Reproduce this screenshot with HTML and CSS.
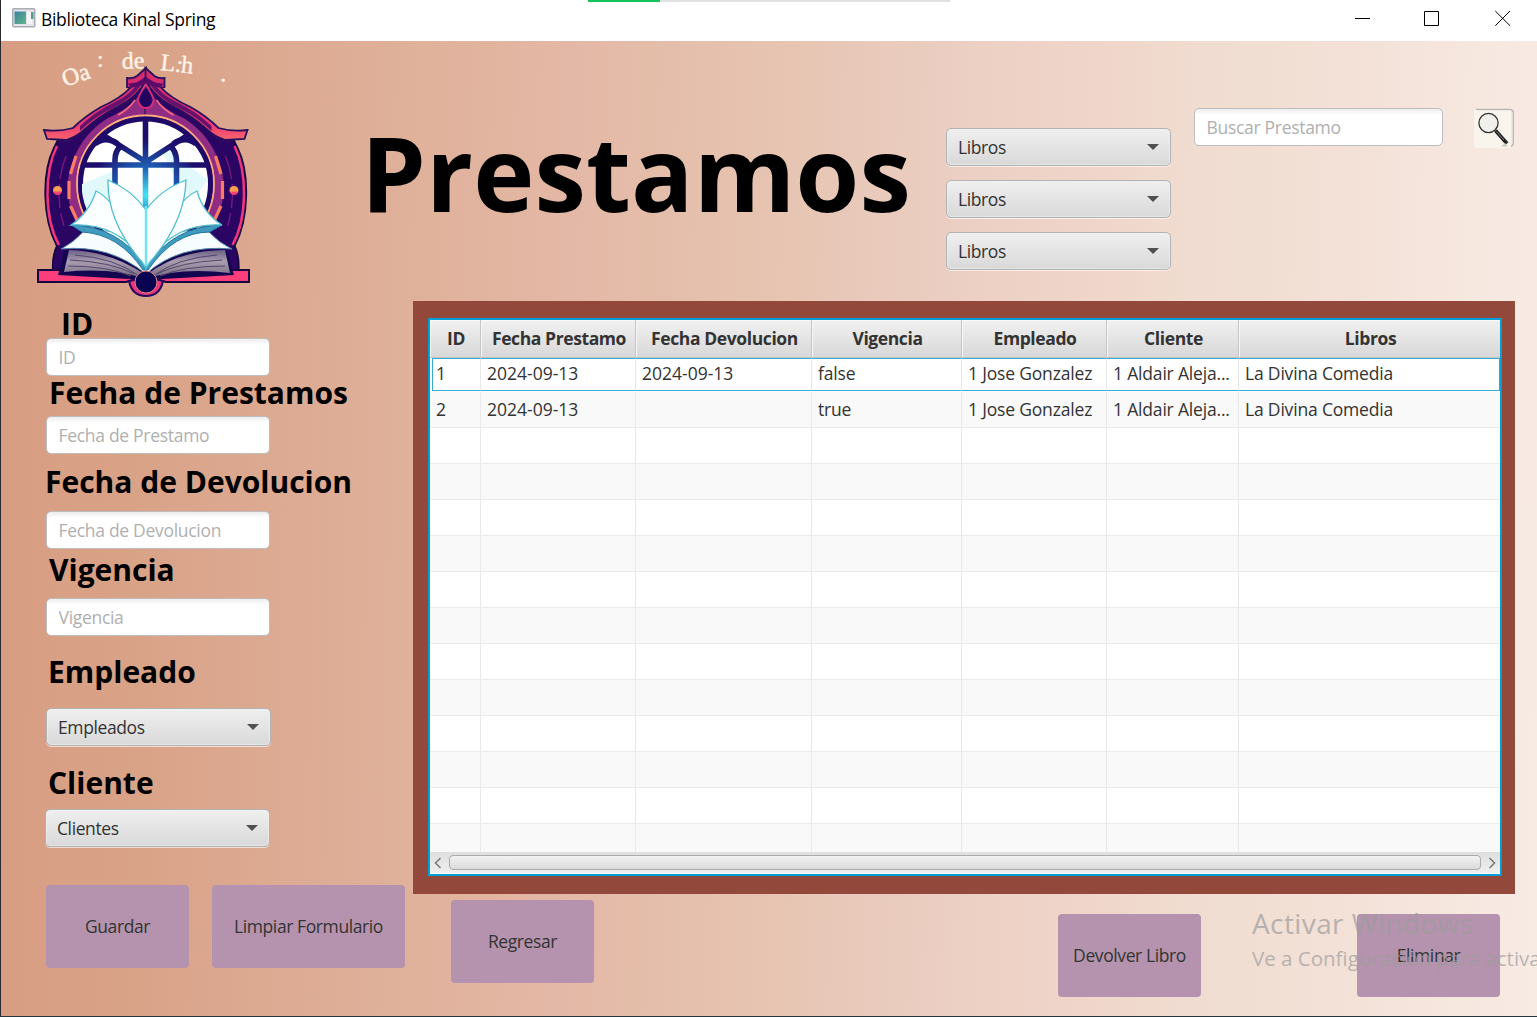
FILE: index.html
```html
<!DOCTYPE html>
<html lang="es">
<head>
<meta charset="utf-8">
<title>Biblioteca Kinal Spring</title>
<link rel="stylesheet" href="styles.css">
</head>
<body>
<div class="window">
  <header class="titlebar">
    <svg class="app-icon" width="24" height="20" viewBox="0 0 24 20">
      <rect x=".75" y=".75" width="22" height="18" rx="1" fill="#e4e5ea" stroke="#a9acb2" stroke-width="1.5"/>
      <rect x="2.500" y="3.500" width="11.500" height="12.500" fill="url(#app)"/>
      <rect x="15" y="4" width="5" height="12" fill="#f6f6f6"/>
      <rect x="19" y="4" width="2.500" height="7" fill="#4d9a90"/>
      <defs><linearGradient id="app" x1="0" y1="0" x2="1" y2="1"><stop offset="0" stop-color="#3c80a0"/><stop offset="1" stop-color="#60b888"/></linearGradient></defs>
    </svg>
    <span class="app-title">Biblioteca Kinal Spring</span>
    <div class="controls">
      <svg width="16" height="16" viewBox="0 0 16 16"><path d="M0 8.500H15"/></svg>
      <svg width="16" height="16" viewBox="0 0 16 16"><path d="M-.5 1.500H13.500V15.500H-.5Z"/></svg>
      <svg width="16" height="16" viewBox="0 0 16 16"><path d="M.3 1L15 15.700M15 1L.3 15.700"/></svg>
    </div>
    <div class="progress"><i></i></div>
  </header>

  <main class="scene">
    <section class="top">
      <svg class="logo" width="230" height="260" viewBox="30 43 230 260">
        <defs>
          <linearGradient id="roof" gradientUnits="userSpaceOnUse" x1="0" y1="80" x2="0" y2="142"><stop offset="0" stop-color="#d52c6f"/><stop offset=".7" stop-color="#ec3775"/><stop offset="1" stop-color="#fb6a6c"/></linearGradient>
          <radialGradient id="bars" gradientUnits="userSpaceOnUse" cx="146" cy="195" r="66"><stop offset="0" stop-color="#47e3f5"/><stop offset=".42" stop-color="#1e5fb4"/><stop offset=".85" stop-color="#1c0d6c"/></radialGradient>
          <linearGradient id="dot" x1="0" y1="0" x2="0" y2="1"><stop offset=".5" stop-color="#fba04f"/><stop offset=".75" stop-color="#f63d78"/></linearGradient>
          <linearGradient id="pages" x1="0" y1="0" x2="0" y2="1"><stop offset="0" stop-color="#6d6186"/><stop offset=".4" stop-color="#a99caf"/><stop offset="1" stop-color="#75677f"/></linearGradient>
          <clipPath id="glass"><circle cx="145.500" cy="184" r="64"/></clipPath>
          <g id="half">
            <path d="M146 88L60 136 54 148C42 172 42 218 57 246Q52 256 53 272H146Z" fill="#2b0563" stroke="#180640" stroke-width="2"/>
            <path d="M57 146C44 172 44 218 59 245" fill="none" stroke="#ee357e" stroke-width="2.500"/>
            <path d="M66 156C57 178 57 204 64 226" fill="none" stroke="#7b1a7e" stroke-width="1.300" stroke-dasharray="24 5"/>
            <path d="M146 84Q136 106 108 118Q84 133 74 158C62 185 68 215 86 236H146Z" fill="#912c85"/>
            <path d="M135 100Q129 109 118 115" fill="none" stroke="#f46c7c" stroke-width="1.500"/>
            <path d="M146 80Q140 97 122 106C104 114 90 122 78 136Q70 142 60 143L68 137Q90 114 118 102Z" fill="#3a0866"/>
            <path d="M146 68L137 76Q133 79 127 78V87L130 88Q121 98 101 107Q85 116 73 128Q59 132 44 130L47 139 66 140Q77 137 85 129Q98 117 117 107Q138 97 146 80Z" fill="url(#roof)" stroke="#29105b" stroke-width="1.800"/>
            <path d="M80 131Q94 117 113 108Q133 98 141 85L137 84Q130 95 115 102Q96 111 80 126Z" fill="#66126c"/>
            <path d="M128 83.500Q138 84 146 76V84L131 88Z" fill="#5a0b69"/>
            <path d="M76 156L70.500 174M69 181V199M70.500 206L77 220" fill="none" stroke="#fa7c62" stroke-width="3.200"/>
            <circle cx="57.500" cy="190.500" r="4.500" fill="url(#dot)"/>
          </g>
        </defs>
        <g class="arc-text">
          <text transform="translate(65 87) rotate(-19)">Oa</text>
          <text transform="translate(97 67)">:</text>
          <text transform="translate(122 69) rotate(-2)">de</text>
          <text transform="translate(160 70) rotate(6)">L.h</text>
          <text transform="translate(220 80) rotate(25)">.</text>
          <text transform="translate(177 64)">.</text>
        </g>
        <use href="#half"/>
        <use href="#half" transform="translate(291.500 0) scale(-1 1)"/>
        <path d="M146 85Q137 97 138 101Q140 108 146 108T153.500 101Q154 97 146 85Z" fill="#230361" stroke="#d72c7b" stroke-width="2"/>
        <circle cx="145.500" cy="184" r="68.500" fill="none" stroke="#ffb07a" stroke-width="1.800"/>
        <circle cx="145.500" cy="184" r="65" fill="#fff" stroke="#200a68" stroke-width="5"/>
        <g clip-path="url(#glass)">
          <path d="M82 184L118 169 108 210H82ZM160 145L171 171 192 200 208 180Z" fill="#e2f9fb"/>
          <path d="M145.500 118V210M82 165H209M146 162L103 135M146 162L188 135M115 190V160Q115 151 121 146M176.500 190V160Q176 151 170 146M95 144Q105 135 118 144M196 144Q186 135 173 144" fill="none" stroke="url(#bars)" stroke-width="5.600"/>
        </g>
        <path d="M38 270H249V282H166L156 279H136L126 282H38Z" fill="#fa3d7b" stroke="#180640" stroke-width="2"/>
        <path d="M65 250L58 275 129 279H162L234 275 227 250Z" fill="#13054f"/>
        <path d="M69 250Q110 251 146 275Q179 250 225 250L230 273Q179 267 146 279Q112 267 64 272Z" fill="url(#pages)"/>
        <path d="M75 255Q115 258 139 276M70 260Q112 262 134 274M68 266Q107 266 131 276M217 255Q177 258 153 276M222 260Q180 262 157 274M225 266Q184 266 160 276" fill="none" stroke="#51476b" stroke-width="1"/>
        <path d="M84 231Q73 243 61 249Q109 244 146 274Q179 244 232 249Q219 243 208 231Z" fill="#f7fdff" stroke="#5085a2" stroke-width="1"/>
        <path d="M71 225Q119 226 146 267Q173 226 222 225L210 232Q174 232 148 270H143Q119 234 82 232Z" fill="#409bbf" stroke="#2375a0" stroke-width="1"/>
        <path d="M71 225Q89 213 96 191Q118 201 145 263Q119 222 71 225ZM222 225Q203 213 197 191Q174 201 147 263Q174 222 222 225Z" fill="#fcffff" stroke="#52c2d1" stroke-width="1.300"/>
        <path d="M108 180Q107 222 142 262L146 268V210Q132 190 108 180ZM186 180Q185 222 150 262L146 268V210Q160 190 186 180Z" fill="#fbffff" stroke="#4ebfd0" stroke-width="1.300"/>
        <path d="M146 206V266" stroke="#71e5ed" stroke-width="2.500"/>
        <path d="M129 281Q132 296 146 296T163 281L155 279 139 279Z" fill="#e83679" stroke="#25085f" stroke-width="2"/>
        <circle cx="146" cy="282" r="11" fill="#080451" stroke="#e58383" stroke-width="1"/>
      </svg>
      <h1 class="heading">Prestamos</h1>
      <div class="filters">
        <div class="combo"><span>Libros</span><i class="arrow"></i></div>
        <div class="combo"><span>Libros</span><i class="arrow"></i></div>
        <div class="combo"><span>Libros</span><i class="arrow"></i></div>
      </div>
      <input class="field search" placeholder="Buscar Prestamo">
      <button class="search-btn" aria-label="Buscar">
        <svg width="42" height="40" viewBox="0 0 42 40">
          <path d="M4 1.500H37Q41.500 1.500 41.500 5V35Q41 38.500 37 38.500" fill="#eee9e5" stroke="#b9b6b3" stroke-width="1.500"/>
          <path d="M2 2.500H39V40H5Q2 40 2 37Z" fill="#f9f4ec"/>
          <circle cx="16.500" cy="15" r="9.600" fill="#f1efeb" stroke="#343434" stroke-width="1.300"/>
          <path d="M23.500 22.500L35 35.500" stroke="#252525" stroke-width="3.600"/><path d="M24.500 23.500L32 32" stroke="#777" stroke-width="1"/>
          <path d="M29 38.500L33 35 36 38.500Z" fill="#ccc9c3"/>
        </svg>
      </button>
    </section>

    <section class="body">
      <form class="sidebar">
        <label class="l-id">ID</label><input class="field f-id" placeholder="ID">
        <label class="l-loan">Fecha de Prestamos</label><input class="field f-loan" placeholder="Fecha de Prestamo">
        <label class="l-return">Fecha de Devolucion</label><input class="field f-return" placeholder="Fecha de Devolucion">
        <label class="l-valid">Vigencia</label><input class="field f-valid" placeholder="Vigencia">
        <label class="l-staff">Empleado</label><div class="combo c-staff"><span>Empleados</span><i class="arrow"></i></div>
        <label class="l-client">Cliente</label><div class="combo c-client"><span>Clientes</span><i class="arrow"></i></div>
        <div class="actions">
          <button type="button" class="btn">Guardar</button>
          <button type="button" class="btn wide">Limpiar Formulario</button>
        </div>
      </form>

      <div class="content">
        <div class="panel">
          <div class="table">
            <div class="tr head"><b>ID</b><b>Fecha Prestamo</b><b>Fecha Devolucion</b><b>Vigencia</b><b>Empleado</b><b>Cliente</b><b>Libros</b></div>
            <div class="rows">
              <div class="tr focused"><span>1</span><span class="date">2024-09-13</span><span class="date">2024-09-13</span><span>false</span><span>1 Jose Gonzalez</span><span>1 Aldair Aleja...</span><span>La Divina Comedia</span></div>
              <div class="tr"><span>2</span><span class="date">2024-09-13</span><span></span><span>true</span><span>1 Jose Gonzalez</span><span>1 Aldair Aleja...</span><span>La Divina Comedia</span></div>
              <div class="tr"><span></span><span></span><span></span><span></span><span></span><span></span><span></span></div>
              <div class="tr"><span></span><span></span><span></span><span></span><span></span><span></span><span></span></div>
              <div class="tr"><span></span><span></span><span></span><span></span><span></span><span></span><span></span></div>
              <div class="tr"><span></span><span></span><span></span><span></span><span></span><span></span><span></span></div>
              <div class="tr"><span></span><span></span><span></span><span></span><span></span><span></span><span></span></div>
              <div class="tr"><span></span><span></span><span></span><span></span><span></span><span></span><span></span></div>
              <div class="tr"><span></span><span></span><span></span><span></span><span></span><span></span><span></span></div>
              <div class="tr"><span></span><span></span><span></span><span></span><span></span><span></span><span></span></div>
              <div class="tr"><span></span><span></span><span></span><span></span><span></span><span></span><span></span></div>
              <div class="tr"><span></span><span></span><span></span><span></span><span></span><span></span><span></span></div>
              <div class="tr"><span></span><span></span><span></span><span></span><span></span><span></span><span></span></div>
              <div class="tr"><span></span><span></span><span></span><span></span><span></span><span></span><span></span></div>
            </div>
            <div class="scrollbar">
              <svg width="8" height="12" viewBox="0 0 8 12"><path d="M6.500 1L1.500 6L6.500 11"/></svg>
              <div class="thumb"></div>
              <svg width="8" height="12" viewBox="0 0 8 12"><path d="M1.500 1L6.500 6L1.500 11"/></svg>
            </div>
          </div>
        </div>
        <div class="bottom">
          <button class="btn back">Regresar</button>
          <button class="btn return">Devolver Libro</button>
          <button class="btn delete">Eliminar</button>
        </div>
      </div>
    </section>
  </main>
  <div class="watermark"><p class="wm-title">Activar Windows</p><p class="wm-sub">Ve a Configuración para activa</p></div>
</div>
</body>
</html>
```
FILE: styles.css
```css
* { box-sizing: border-box; }

body {
  margin: 0;
  overflow: hidden;
  font: 17.5px/24px "Open Sans", "Noto Sans", sans-serif;
  letter-spacing: -0.4px;
  color: #333;
}

.window {
  position: relative;
  width: 1537px;
  height: 1017px;
  overflow: hidden;
  display: flex;
  flex-direction: column;
  border-left: 1px solid #2a2a2e;
  border-bottom: 1px solid #26343c;
}

/* Title bar */
.titlebar {
  position: relative;
  flex: none;
  height: 41px;
  display: flex;
  align-items: flex-start;
  padding: 8px 26px 0 11px;
  background: #fff;
}
.app-title { margin: -1px 0 0 5px; color: #000; letter-spacing: -0.3px; }
.controls { margin: 2px 0 0 auto; display: flex; gap: 54px; }
.controls svg { fill: none; stroke: #000; stroke-width: 1; overflow: visible; }
.progress {
  position: absolute;
  left: 587px;
  top: 0;
  width: 362px;
  height: 2px;
  background: #e1e1e1;
}
.progress i { display: block; width: 72px; height: 2px; background: #14c35c; }

/* Scene */
.scene {
  flex: 1;
  background: linear-gradient(91deg, #d79d82 0, #d9a388 10%, #ddab94 20%, #e0b29c 28%, #e4b8a6 37%, #e4beaa 43%, #e7c5b2 51%, #e8c8b9 55%, #ecd0c4 63%, #f0d5ca 71%, #f0dcd0 77%, #f3e1d7 87%, #f8ebe4 100%);
}
.top { display: flex; align-items: flex-start; height: 260px; }
.logo { margin: 2px 0 0 29px; flex: none; }
.arc-text { fill: #fff3e6; stroke: #fff3e6; stroke-width: .4; font: 24px "Liberation Serif", serif; letter-spacing: 0; }
.heading {
  width: 560px;
  margin: 61px 0 0 101px;
  font-size: 103.500px;
  line-height: 140px;
  letter-spacing: .1px;
  color: #000;
}
.filters { display: flex; flex-direction: column; gap: 14px; margin: 87px 0 0 25px; }
.search { width: 249px; margin: 67px 0 0 23px; }
.search-btn {
  width: 42px;
  height: 40px;
  margin: 67px 0 0 29px;
  padding: 0;
  border: 0;
  background: none;
}
.search-btn svg { display: block; }

/* Form controls */
.field, .combo {
  height: 38px;
  font: inherit;
  letter-spacing: inherit;
  border: 1.500px solid #bdbdbd;
  border-radius: 5px;
}
.field {
  display: block;
  padding: 0 11.500px;
  background: linear-gradient(#ededed 0, #fff 6px);
  letter-spacing: -0.3px;
  outline: 0;
}
.field::placeholder { color: #b0b0b0; opacity: 1; }
.combo {
  width: 225px;
  display: flex;
  align-items: center;
  justify-content: space-between;
  padding: 0 11px;
  background: linear-gradient(#efefef, #d9d9d9);
  border: 1px solid #b2b2b2;
  box-shadow: inset 0 0 0 1px #f1f1f180, 0 1px 0 #ffffffa0;
}
.arrow {
  border: solid transparent;
  border-width: 6px 6px 0;
  border-top-color: #505050;
}

/* Left column */
.body { display: flex; }
.sidebar { width: 412px; padding-top: 7px; }
.sidebar label {
  display: block;
  margin-left: 47px;
  padding-top: 1px;
  height: 30px;
  font-size: 30px;
  line-height: 30px;
  font-weight: 700;
  letter-spacing: 0;
  color: #000;
}
.sidebar .field, .sidebar .combo { margin-left: 45px; }
.sidebar .field { width: 224px; }
.sidebar .l-id { margin-left: 60px; }
.sidebar .f-id { margin-bottom: 1px; }
.sidebar .l-loan { margin-bottom: 9px; margin-left: 48px; }
.sidebar .l-return { margin-top: 12px; margin-left: 44px; margin-bottom: 15px; }
.sidebar .l-valid { margin-top: 5px; margin-bottom: 14px; margin-left: 48px; }
.sidebar .l-staff { margin-top: 20px; margin-bottom: 22px; }
.sidebar .l-client { margin-top: 21px; margin-bottom: 12px; }
.sidebar .c-client { margin-left: 44px; }
.actions { display: flex; gap: 23px; margin: 38px 0 0 45px; }
.btn {
  width: 143px;
  height: 83px;
  padding: 0 0 2px;
  border: 0;
  border-radius: 4px;
  background: #b593ae;
  color: #333;
  font: inherit;
  letter-spacing: inherit;
  white-space: nowrap;
}
.btn.wide { width: 193px; }

/* Table */
.panel {
  width: 1102px;
  height: 593px;
  padding: 17px 13px 18px 15px;
  background: #92493c;
}
.table {
  height: 558px;
  border: 2px solid #039ed3;
  background: #fff;
  display: flex;
  flex-direction: column;
}
.tr {
  display: grid;
  grid-template-columns: 51px 155px 176px 150px 145px 132px 1fr;
  height: 36px;
}
.head { height: 38px; flex: none; background: linear-gradient(#f1f1f1, #d8d8d8); border-bottom: 1px solid #c4c4c4; }
.head b {
  padding-left: 2px;
  text-align: center;
  line-height: 37px;
  border-right: 1px solid #c4c4c4;
  box-shadow: inset 1px 1px #f8f8f8;
  letter-spacing: -0.4px;
}
.head b:last-child { border: 0; }
.rows { height: 494px; overflow: hidden; letter-spacing: -0.18px; }
.rows .tr:first-child { height: 34px; }
.rows .tr:nth-child(even) { background: #f9f9f9; }
.rows span {
  padding-left: 6px;
  line-height: 35px;
  border-right: 1px solid #e9e9e9;
  border-bottom: 1px solid #ebebeb;
  white-space: nowrap;
}
.rows .date { letter-spacing: 0; }
.rows span:last-child { border-right: 0; }
.rows .focused span {
  margin-bottom: 1px;
  line-height: 29px;
  border-top: 1.500px solid #36acd5;
  border-bottom: 1.500px solid #36acd5;
}
.rows .focused span:first-child { border-left: 1px solid #36acd5; margin-left: 2px; padding-left: 3px; }
.rows .focused span:last-child { border-right: 1px solid #36acd5; }
.scrollbar {
  height: 22px;
  display: flex;
  align-items: center;
  gap: 7px;
  padding: 0 4px;
  background: linear-gradient(#dedede, #efefef);
  border-bottom: 1px solid #fff;
}
.scrollbar svg { flex: none; fill: none; stroke: #777; stroke-width: 1.500; }
.thumb {
  flex: 1;
  height: 15px;
  border: 1px solid #ababab;
  border-radius: 4px;
  background: linear-gradient(#f3f3f3, #dadada);
}
.bottom { display: flex; align-items: flex-start; padding-left: 38px; }
.back { margin-top: 6px; }
.return { margin: 20px 0 0 464px; }
.delete { margin: 20px 0 0 156px; }

/* Activation notice floating over the window */
.watermark {
  position: absolute;
  left: 1251px;
  top: 904px;
  color: #9c9c9c;
  opacity: .68;
  white-space: nowrap;
  pointer-events: none;
}
.watermark p { margin: 0; }
.wm-title { font-size: 28px; line-height: 38px; letter-spacing: .4px; }
.wm-sub { font-size: 20.500px; line-height: 32px; letter-spacing: 0; }
```
